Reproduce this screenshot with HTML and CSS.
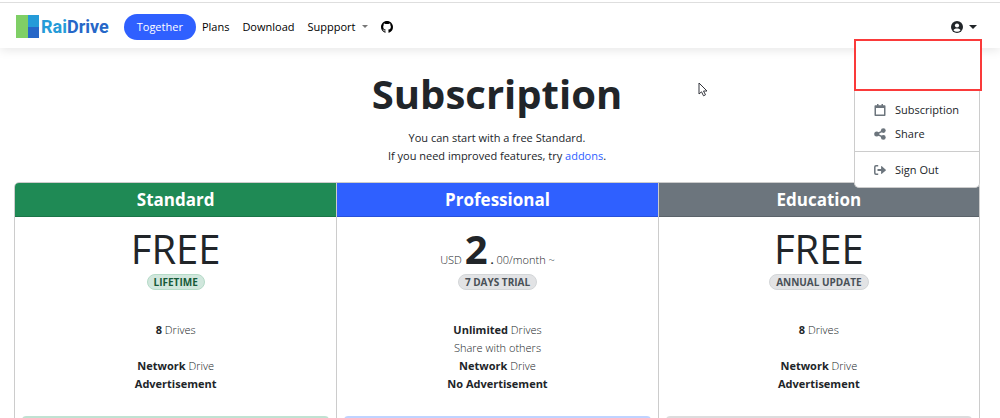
FILE: index.html
```html
<!DOCTYPE html>
<html lang="en">

<head>
  <meta charset="utf-8">
  <meta name="viewport" content="width=device-width, initial-scale=1.0">
  <title>RaiDrive - Subscription</title>
  <link rel="stylesheet" href="styles.css">
</head>

<body>
  <header class="navbar">
    <a class="brand" href="#">
      <svg class="brand-mark" viewBox="0 0 23 23" aria-hidden="true">
        <path fill="#7fcf66" d="M0 0h12v23H0z"/>
        <path fill="#259bd8" d="M12 0h11v12H12z"/>
        <path fill="#2667c8" d="M12 12h11v11H12z"/>
      </svg>
      <span class="brand-name">Rai<span class="brand-drive">Drive</span></span>
    </a>
    <nav class="nav-links">
      <a class="together" href="#">Together</a>
      <a href="#">Plans</a>
      <a href="#">Download</a>
      <button type="button" class="nav-button">Suppport <span class="caret caret-muted"></span></button>
      <a class="github" href="#" aria-label="GitHub">
        <svg viewBox="0 0 16 16" aria-hidden="true">
          <path d="M8 0C3.58 0 0 3.58 0 8c0 3.54 2.29 6.53 5.47 7.59.4.07.55-.17.55-.38 0-.19-.01-.82-.01-1.49-2.01.37-2.53-.49-2.69-.94-.09-.23-.48-.94-.82-1.13-.28-.15-.68-.52-.01-.53.63-.01 1.08.58 1.23.82.72 1.21 1.87.87 2.33.66.07-.52.28-.87.51-1.07-1.78-.2-3.64-.89-3.64-3.95 0-.87.31-1.59.82-2.15-.08-.2-.36-1.02.08-2.12 0 0 .67-.21 2.2.82.64-.18 1.32-.27 2-.27s1.36.09 2 .27c1.53-1.04 2.2-.82 2.2-.82.44 1.1.16 1.92.08 2.12.51.56.82 1.27.82 2.15 0 3.07-1.87 3.75-3.65 3.95.29.25.54.73.54 1.48 0 1.07-.01 1.93-.01 2.2 0 .21.15.46.55.38A8.01 8.01 0 0 0 16 8c0-4.42-3.58-8-8-8z"/>
        </svg>
      </a>
    </nav>
    <div class="account">
      <button type="button" class="nav-button" aria-label="Account">
        <svg class="avatar" viewBox="0 0 24 24" aria-hidden="true">
          <circle cx="12" cy="12" r="12" fill="#212529"/>
          <circle cx="12" cy="9" r="4.2" fill="#fff"/>
          <path fill="#fff" d="M4.8 18.6C6 15.700 8.500 14.800 12 14.800s6 .9 7.200 3.800A9.800 9.800 0 0 1 12 21.600a9.800 9.800 0 0 1-7.200-3z"/>
        </svg>
        <span class="caret"></span>
      </button>
      <div class="menu">
        <div class="menu-user"></div>
        <div class="menu-group">
          <a href="#">
            <svg viewBox="0 0 12 12" aria-hidden="true"><path fill-rule="evenodd" d="M3 0h1.500v1.300h3V0H9v1.300h1.500c.6 0 1 .4 1 1V11c0 .6-.4 1-1 1h-9c-.6 0-1-.4-1-1V2.300c0-.6.4-1 1-1H3zM2 4v6.500h8V4z"/></svg>
            Subscription
          </a>
          <a href="#">
            <svg viewBox="0 0 12 12" aria-hidden="true">
              <path fill="none" stroke="#6c757d" stroke-width="1.500" d="M9.300 2.600L2.700 6l6.600 3.400"/>
              <circle cx="2.700" cy="6" r="2.500"/>
              <circle cx="9.300" cy="2.600" r="2.400"/>
              <circle cx="9.300" cy="9.400" r="2.400"/>
            </svg>
            Share
          </a>
        </div>
        <div class="menu-group">
          <a href="#">
            <svg viewBox="0 0 12 12" aria-hidden="true">
              <path fill="none" stroke="#6c757d" stroke-width="1.500" d="M4.200 1.700H2C1.300 1.700.8 2.200.8 2.900v6.200c0 .7.500 1.200 1.200 1.200h2.200"/>
              <path d="M3.500 4.900h3.600V2.600c0-.5.5-.7.8-.4l3.900 3.500c.2.200.2.500 0 .7L7.900 9.800c-.3.300-.8.100-.8-.4V7.100H3.500z"/>
            </svg>
            Sign Out
          </a>
        </div>
      </div>
    </div>
  </header>

  <main class="container">
    <div class="intro">
      <h1>Subscription</h1>
      <p>You can start with a free Standard.<br>If you need improved features, try <a href="#">addons</a>.</p>
    </div>

    <div class="plans">
      <section class="plan">
        <h2 class="green">Standard</h2>
        <div class="price"><span class="free">FREE</span></div>
        <span class="badge badge-green">LIFETIME</span>
        <ul>
          <li><b>8</b> Drives</li>
          <li></li>
          <li><b>Network</b> Drive</li>
          <li><b>Advertisement</b></li>
        </ul>
        <button type="button" class="plan-button light-green" aria-label="Standard"></button>
      </section>
      <section class="plan">
        <h2 class="blue">Professional</h2>
        <div class="price">USD <b class="amount">2</b> <b>.</b> 00/month ~</div>
        <span class="badge">7 DAYS TRIAL</span>
        <ul>
          <li><b>Unlimited</b> Drives</li>
          <li>Share with others</li>
          <li><b>Network</b> Drive</li>
          <li><b>No Advertisement</b></li>
        </ul>
        <button type="button" class="plan-button light-blue" aria-label="Professional"></button>
      </section>
      <section class="plan">
        <h2 class="gray">Education</h2>
        <div class="price"><span class="free">FREE</span></div>
        <span class="badge">ANNUAL UPDATE</span>
        <ul>
          <li><b>8</b> Drives</li>
          <li></li>
          <li><b>Network</b> Drive</li>
          <li><b>Advertisement</b></li>
        </ul>
        <button type="button" class="plan-button light-gray" aria-label="Education"></button>
      </section>
    </div>
  </main>

  <svg class="pointer" viewBox="0 0 10 15" aria-hidden="true">
    <path fill="#fff" stroke="#33353c" d="M1 1v11l2.500-2.200 2 4 2-1-2-3.800H9z"/>
  </svg>
</body>

</html>
```
FILE: styles.css
```css
* {
  box-sizing: border-box;
}

body {
  margin: 0;
  height: 100vh;
  overflow: hidden;
  position: relative;
  font-family: "Open Sans", "Noto Sans", sans-serif;
  font-size: 11px;
  line-height: 18px;
  color: #212529;
  background-color: #fff;
}

a {
  color: inherit;
  text-decoration: none;
}

b {
  font-weight: 700;
}

button {
  font: inherit;
  color: inherit;
  border: none;
  background: none;
  padding: 0;
  cursor: pointer;
}

.navbar {
  display: flex;
  align-items: center;
  height: 48px;
  padding: 4px 23px 0 16px;
  border-top: 1px solid #fff;
  background: linear-gradient(#fff 1px, #dedede 1px, #dedede 2px, #fff 2px);
  box-shadow: 0 2px 10px rgba(0, 0, 0, 0.1);
}

.brand {
  display: flex;
  align-items: center;
  gap: 2px;
  margin-right: 15px;
}

.brand-mark {
  width: 23px;
  height: 23px;
}

.brand-name {
  font-family: Roboto, sans-serif;
  font-size: 18px;
  font-weight: bold;
  color: #259bd8;
}

.brand-drive {
  color: #2667c8;
}

.nav-links {
  display: flex;
  align-items: center;
  gap: 13px;
  color: #000;
}

.together {
  padding: 4px 13px;
  margin-right: -7px;
  border-radius: 13px;
  color: #fff;
  background-color: #2f60ff;
}

.nav-button {
  display: flex;
  align-items: center;
  gap: 6px;
}

.caret {
  border-top: 4px solid #212529;
  border-left: 4px solid transparent;
  border-right: 4px solid transparent;
}

.caret-muted {
  border-top-color: #777;
  border-top-width: 3px;
  border-left-width: 3px;
  border-right-width: 3px;
}

.github svg {
  display: block;
  width: 12px;
  height: 12px;
}

.account {
  position: relative;
  margin-left: auto;
}

.avatar {
  width: 12px;
  height: 12px;
}

/* account dropdown */
.menu {
  position: absolute;
  z-index: 1;
  top: 18px;
  right: -5px;
  width: 128px;
}

.menu-user {
  height: 52px;
  border: 2px solid #fa3a3a;
  background-color: #fff;
}

.menu-group {
  margin-right: 2px;
  padding: 7px 0 5px;
  border: 1px solid #ccc;
  border-top: none;
  background-color: #fff;
}

.menu-group:last-child {
  padding-top: 6px;
  border-radius: 0 0 5px 5px;
}

.menu-group a {
  display: flex;
  align-items: center;
  gap: 9px;
  padding: 3px 0 3px 19px;
}

.menu-group svg {
  flex: none;
  width: 12px;
  height: 12px;
  fill: #6c757d;
}

.container {
  padding: 0 20px 0 14px;
}

.intro {
  padding: 16px 0 17px;
  text-align: center;
}

.intro h1 {
  margin: 0 0 5px;
  font-size: 40px;
  line-height: 60px;
}

.intro p {
  margin: 0;
}

.intro p a {
  color: #2f60ff;
}

.plans {
  display: grid;
  grid-template-columns: repeat(3, 1fr);
  border: 1px solid #ccc;
  border-radius: 5px;
  overflow: hidden;
}

.plan {
  display: flex;
  flex-direction: column;
  align-items: center;
  font-weight: 300;
}

.plan + .plan {
  border-left: 1px solid #ccc;
}

.plan h2 {
  width: 100%;
  margin: 0;
  padding: 5px 0;
  border-bottom: 1px solid rgba(0, 0, 0, 0.15);
  font-size: 17px;
  line-height: 23px;
  text-align: center;
  color: #fff;
}

.green {
  background-color: #1f8a55;
}

.blue {
  background-color: #2f60ff;
}

.gray {
  background-color: #6c757d;
}

.price {
  height: 57px;
  padding-top: 4px;
  line-height: 56px;
  white-space: nowrap;
}

.free {
  font-size: 40px;
  font-weight: 400;
}

.amount {
  font-size: 40px;
}

.badge {
  padding: 0 6px;
  border: 1px solid #d3d6d8;
  border-radius: 8px;
  font-size: 10px;
  font-weight: bold;
  line-height: 14px;
  color: #495057;
  background-color: #e2e3e5;
}

.badge-green {
  border-color: #b5dbc8;
  color: #165a38;
  background-color: #d1e7dd;
}

.plan ul {
  margin: 0;
  padding: 31px 0 23px;
  list-style: none;
  text-align: center;
}

.plan li {
  height: 18px;
}

.plan-button {
  align-self: stretch;
  height: 30px;
  margin: 0 7px 8px;
  border-radius: 4px;
}

.light-green {
  background-color: #c0e2d2;
}

.light-blue {
  background-color: #bfd3ff;
}

.light-gray {
  background-color: #dcdcdd;
}

/* mouse pointer over the page */
.pointer {
  position: absolute;
  left: 698px;
  top: 82px;
  width: 10px;
  height: 15px;
}
```
